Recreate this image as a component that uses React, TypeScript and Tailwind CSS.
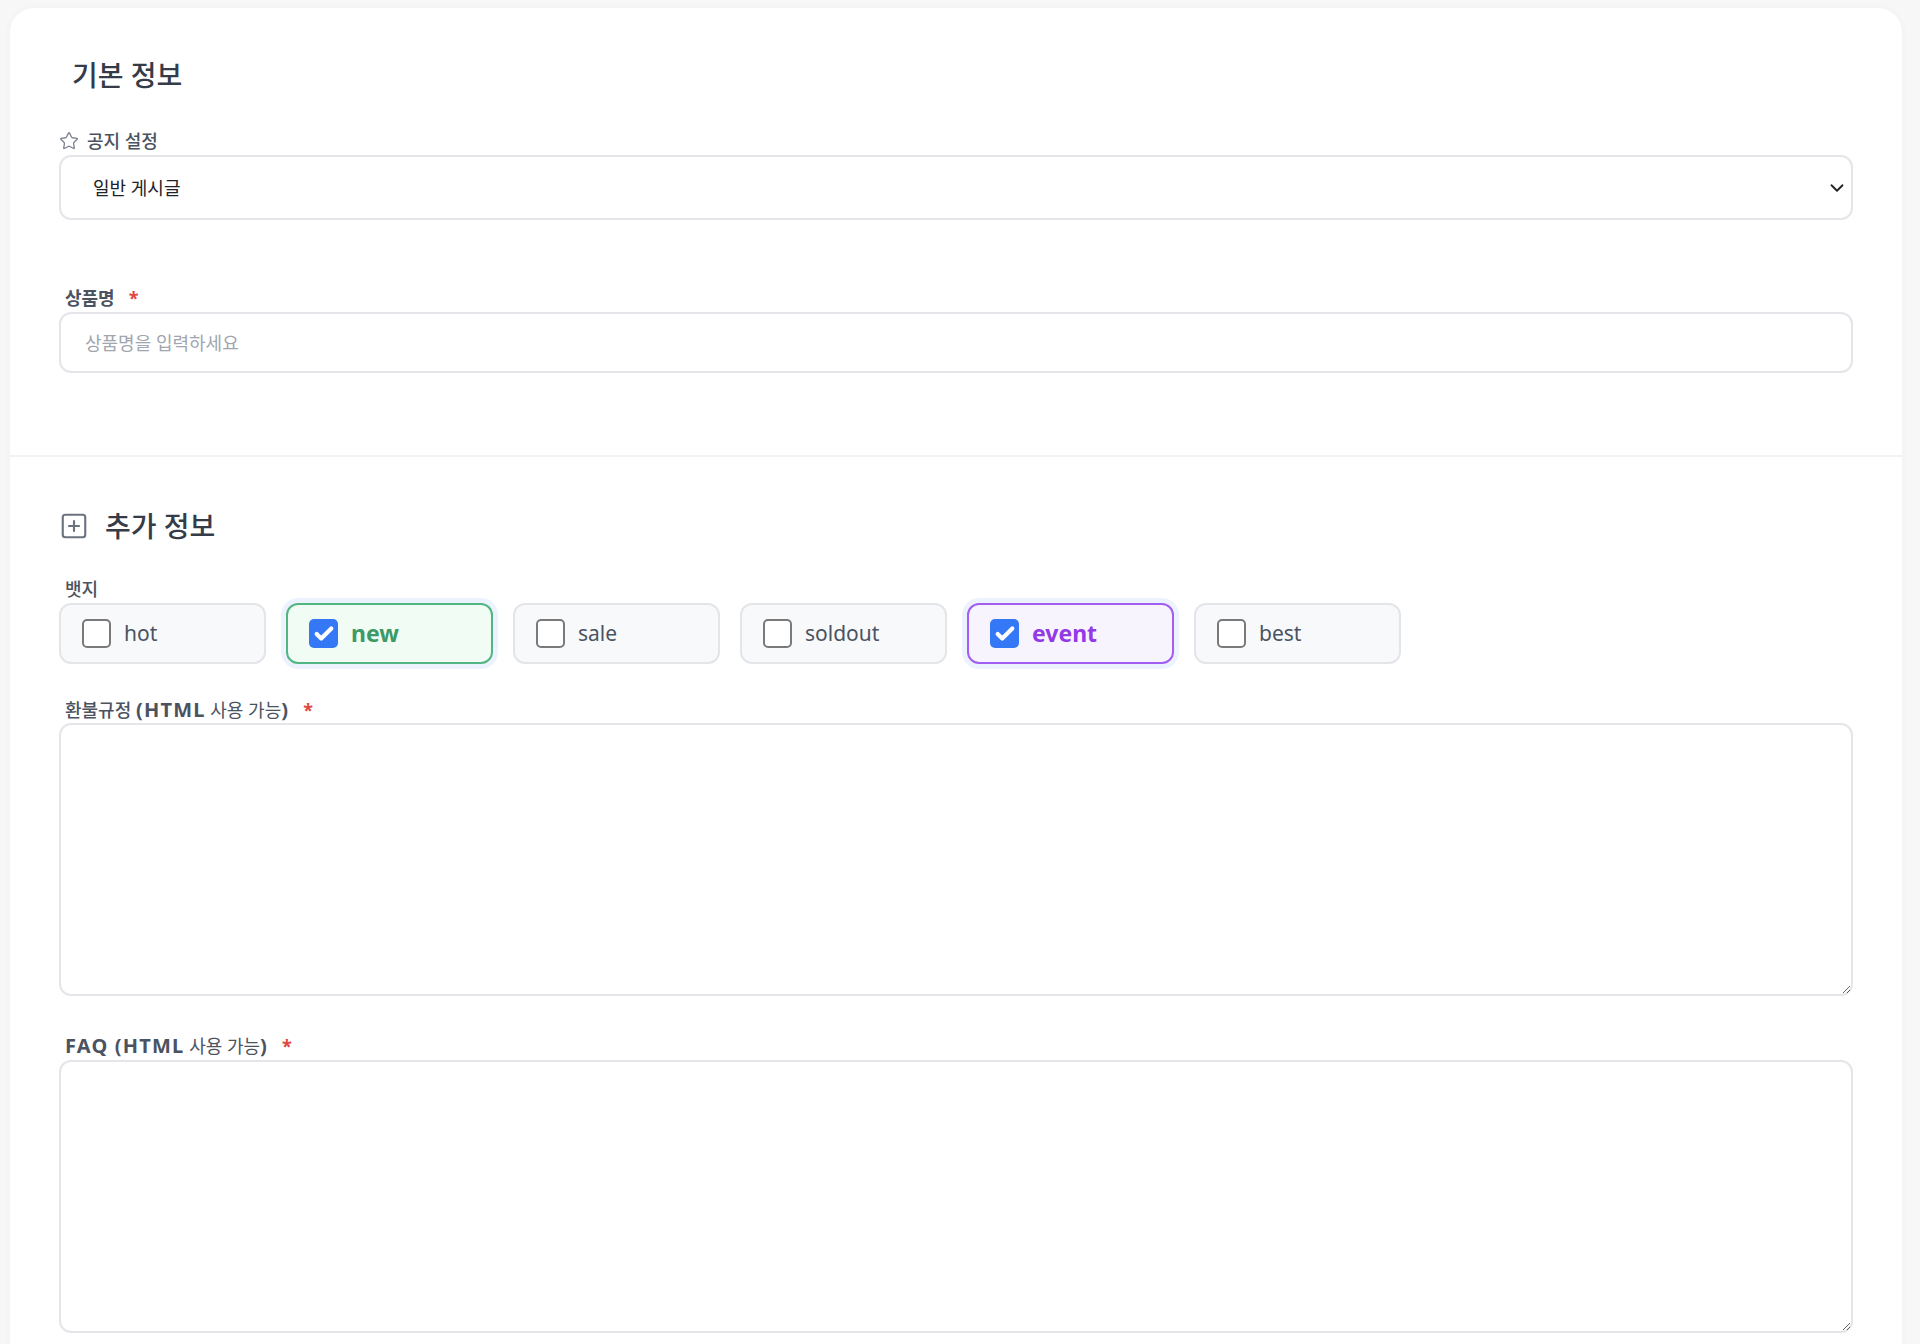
import { useState } from "react";
import { Star, SquarePlus, ChevronDown, Check } from "lucide-react";

const BADGES = [
  { key: "hot", label: "hot" },
  { key: "new", label: "new" },
  { key: "sale", label: "sale" },
  { key: "soldout", label: "soldout" },
  { key: "event", label: "event" },
  { key: "best", label: "best" },
];

const BADGE_ACTIVE: Record<string, string> = {
  new: "border-[#52b683] bg-[#f1fcf5] text-[#3c9a67] text-[23px] font-bold shadow-[0_0_0_5px_#edf3fe]",
  event: "border-[#a25ef0] bg-[#f8f4fe] text-[#9339e6] text-[23px] font-bold shadow-[0_0_0_5px_#edf3fe]",
};

const FONT = "font-['Noto_Sans','Noto_Sans_CJK_KR',sans-serif]";

function Required() {
  return <span className="ml-3.5 text-[#e0483f] font-bold">*</span>;
}

// latin part of the field labels is set a bit larger and wider than the hangul
function Latin({ children }: { children: React.ReactNode }) {
  return <span className="text-[20px] tracking-[0.06em]">{children}</span>;
}

function BadgeToggle({
  label,
  checked,
  activeClass,
  onToggle,
}: {
  label: string;
  checked: boolean;
  activeClass: string;
  onToggle: () => void;
}) {
  return (
    <button
      type="button"
      onClick={onToggle}
      className={`flex items-center w-[207px] h-[61px] pl-[21px] rounded-xl border-2 ${
        checked ? activeClass : "border-[#e4e5e9] bg-[#f8f9fb] text-[#4b5361] text-[21px]"
      }`}
    >
      {checked ? (
        <span className="flex items-center justify-center w-[29px] h-[29px] rounded-[5px] bg-[#3578f6]">
          <Check className="w-[22px] h-[22px] text-white" strokeWidth={4.5} />
        </span>
      ) : (
        <span className="w-[29px] h-[29px] rounded-[5px] border-2 border-[#7a7a7a] bg-white" />
      )}
      <span className="ml-[13px] leading-none">{label}</span>
    </button>
  );
}

export default function App() {
  const [selected, setSelected] = useState<string[]>(["new", "event"]);

  const toggle = (key: string) =>
    setSelected((prev) =>
      prev.includes(key) ? prev.filter((k) => k !== key) : [...prev, key]
    );

  return (
    <div className={`min-h-screen bg-[#f7f7f7] pl-[10px] pr-[18px] pt-2 ${FONT}`}>
      <div className="bg-white rounded-3xl shadow-[0_0_8px_rgba(0,0,0,0.03)] pb-10">
        {/* 기본 정보 */}
        <section className="px-[49px] pt-[49px] pb-[82px] border-b-2 border-[#f2f3f5]">
          <h2 className="px-[13px] text-[28px] leading-9 font-medium text-[#353c48]">
            기본 정보
          </h2>

          <label className="mt-9 flex items-center gap-2 text-[18px] leading-6 text-[#4b5361] font-medium">
            <Star className="w-5 h-5 text-[#7d8490]" strokeWidth={1.6} />
            공지 설정
          </label>
          <div className="relative mt-0.5">
            <select className="w-full h-[65px] appearance-none rounded-xl border-2 border-[#e4e5e9] bg-white pl-8 pr-12 text-lg text-[#1f2329] outline-none">
              <option>일반 게시글</option>
              <option>공지 게시글</option>
            </select>
            <ChevronDown
              className="absolute right-[5px] top-1/2 -translate-y-1/2 w-[22px] h-[22px] text-[#222] pointer-events-none"
              strokeWidth={2}
            />
          </div>

          <label className="mt-[66px] block pl-1.5 text-[18px] leading-6 font-semibold text-[#4b5361]">
            상품명
            <Required />
          </label>
          <input
            type="text"
            placeholder="상품명을 입력하세요"
            className="mt-0.5 w-full h-[61px] rounded-xl border-2 border-[#e4e5e9] bg-white px-6 text-[18px] text-[#1f2329] placeholder:text-[#a0a5ae] outline-none"
          />
        </section>

        {/* 추가 정보 */}
        <section className="px-[49px] pt-[51px]">
          <h2 className="flex items-center gap-4 text-[28px] leading-9 font-medium text-[#353c48]">
            <SquarePlus className="w-[30px] h-[30px] text-[#6b7280]" strokeWidth={1.7} />
            추가 정보
          </h2>

          <label className="mt-[33px] block pl-1.5 text-[18px] leading-6 text-[#4b5361] font-medium">
            뱃지
          </label>
          <div className="mt-0.5 flex gap-5">
            {BADGES.map((b) => (
              <BadgeToggle
                key={b.key}
                label={b.label}
                checked={selected.includes(b.key)}
                activeClass={BADGE_ACTIVE[b.key] ?? BADGE_ACTIVE.new}
                onToggle={() => toggle(b.key)}
              />
            ))}
          </div>

          <label className="mt-[34px] block pl-1.5 text-[18px] leading-6 font-bold text-[#4b5361]">
            <span className="font-medium">환불규정</span> <Latin>(HTML</Latin>{" "}
            <span className="font-normal">사용 가능</span>
            <Latin>)</Latin>
            <Required />
          </label>
          <textarea className="mt-px block w-full h-[273px] rounded-xl border-2 border-[#e4e5e9] bg-white p-5 text-base outline-none" />

          <label className="mt-[38px] block pl-1.5 text-[18px] leading-6 font-bold text-[#4b5361]">
            <Latin>FAQ (HTML</Latin> <span className="font-normal">사용 가능</span>
            <Latin>)</Latin>
            <Required />
          </label>
          <textarea className="mt-0.5 block w-full h-[273px] rounded-xl border-2 border-[#e4e5e9] bg-white p-5 text-base outline-none" />
        </section>
      </div>
    </div>
  );
}
